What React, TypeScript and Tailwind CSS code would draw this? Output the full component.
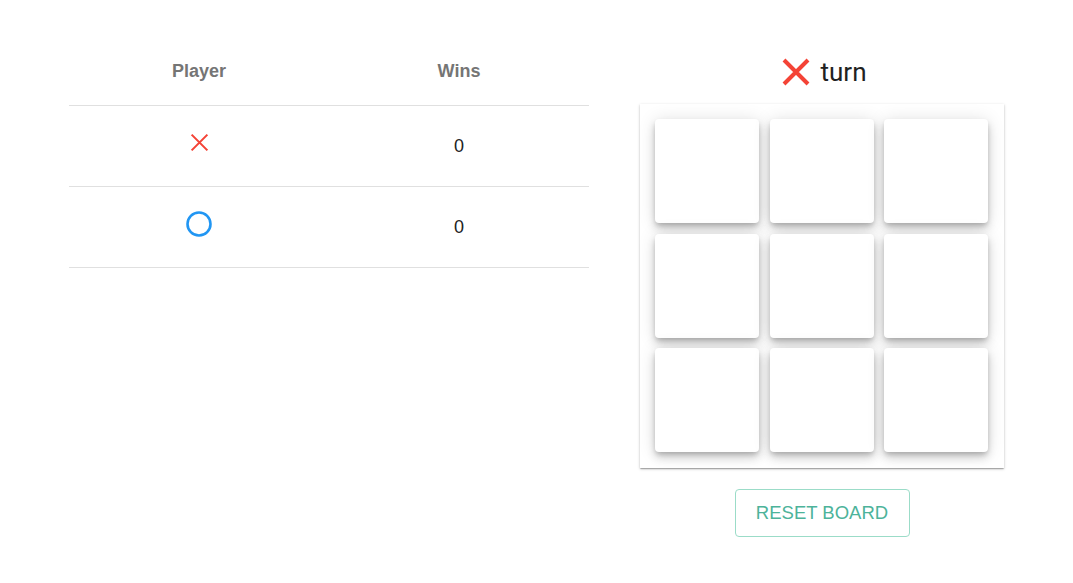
import React, { useState } from 'react';

type Mark = 'X' | 'O' | null;

function XMark({ size, stroke }: { size: number; stroke: number }) {
  return (
    <svg width={size} height={size} viewBox="0 0 24 24" className="block">
      <path d="M3 3L21 21M21 3L3 21" stroke="#f44336" strokeWidth={stroke} fill="none" />
    </svg>
  );
}

function OMark({ size }: { size: number }) {
  return (
    <svg width={size} height={size} viewBox="0 0 26 26" className="block">
      <circle cx="13" cy="13" r="11.5" stroke="#2196f3" strokeWidth="2.6" fill="none" />
    </svg>
  );
}

export default function App() {
  const [board, setBoard] = useState<Mark[]>(Array(9).fill(null));
  const [turn, setTurn] = useState<'X' | 'O'>('X');
  const wins = { X: 0, O: 0 };

  const play = (i: number) => {
    if (board[i]) return;
    const next = board.slice();
    next[i] = turn;
    setBoard(next);
    setTurn(turn === 'X' ? 'O' : 'X');
  };

  const reset = () => {
    setBoard(Array(9).fill(null));
    setTurn('X');
  };

  return (
    <div className="w-[1073px] h-[583px] bg-white flex gap-[51px] px-[69px] pt-10 font-['Liberation_Sans',Arial,sans-serif]">
      <div className="w-[521px]">
        <div className="grid grid-cols-2 h-[66px] border-b border-[#e0e0e0] items-center pb-[2px]">
          <div className="text-center text-[18px] font-bold text-[#757575]">Player</div>
          <div className="text-center text-[18px] font-bold text-[#757575]">Wins</div>
        </div>
        <div className="grid grid-cols-2 h-[81px] border-b border-[#e0e0e0] items-center">
          <div className="flex justify-center pb-[8px]">
            <XMark size={21} stroke={2.4} />
          </div>
          <div className="text-center text-[18px] text-[#222]">{wins.X}</div>
        </div>
        <div className="grid grid-cols-2 h-[81px] border-b border-[#e0e0e0] items-center">
          <div className="flex justify-center pb-[6px]">
            <OMark size={26} />
          </div>
          <div className="text-center text-[18px] text-[#222]">{wins.O}</div>
        </div>
      </div>

      <div className="w-[364px] flex flex-col items-center">
        <div className="h-[64px] flex items-center justify-center gap-[8px] pl-[3px]">
          {turn === 'X' ? <XMark size={32} stroke={3} /> : <OMark size={28} />}
          <span className="text-[26px] text-[#212121] font-['Roboto',sans-serif]">turn</span>
        </div>
        <div className="w-[364px] h-[364px] bg-white p-[15px] grid grid-cols-3 gap-[10px] shadow-[0_1px_3px_rgba(0,0,0,0.2),0_1px_1px_rgba(0,0,0,0.14),0_2px_1px_-1px_rgba(0,0,0,0.12)]">
          {board.map((m, i) => (
            <button
              key={i}
              onClick={() => play(i)}
              className="w-[104px] h-[104px] bg-white rounded-[4px] flex items-center justify-center shadow-[0_3px_5px_-1px_rgba(0,0,0,0.2),0_6px_10px_0_rgba(0,0,0,0.14),0_1px_18px_0_rgba(0,0,0,0.12)]"
            >
              {m === 'X' && <XMark size={60} stroke={3} />}
              {m === 'O' && <OMark size={60} />}
            </button>
          ))}
        </div>
        <button
          onClick={reset}
          className="mt-[21px] w-[175px] h-[48px] rounded-[4px] border border-[#9bdcc8] text-[#4db39a] text-[18.5px] font-['Liberation_Sans',Arial,sans-serif]"
        >
          RESET BOARD
        </button>
      </div>
    </div>
  );
}
